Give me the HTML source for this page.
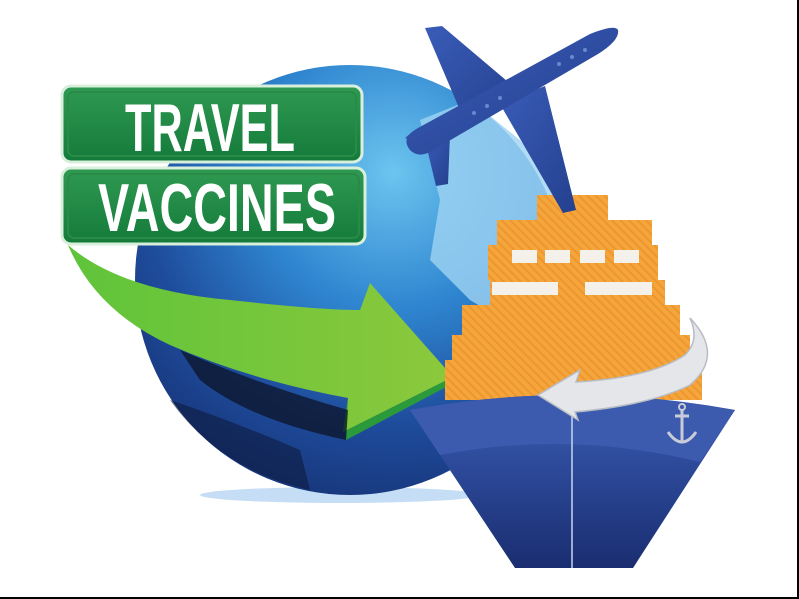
<!DOCTYPE html>
<html><head><meta charset="utf-8"><style>
html,body{margin:0;padding:0;background:#fff;}
svg{display:block}
</style></head><body>
<svg width="799" height="599" viewBox="0 0 799 599" xmlns="http://www.w3.org/2000/svg">
<defs>
<radialGradient id="gl" cx="0.6" cy="0.25" r="0.9">
<stop offset="0" stop-color="#6cc4ef"/><stop offset="0.35" stop-color="#2f86d0"/><stop offset="0.65" stop-color="#1e4c9c"/><stop offset="1" stop-color="#142a68"/></radialGradient>
<linearGradient id="sg" x1="0" y1="0" x2="0" y2="1"><stop offset="0" stop-color="#2f9a52"/><stop offset="1" stop-color="#147a3a"/></linearGradient>
<linearGradient id="ag" x1="0" y1="0" x2="1" y2="0"><stop offset="0" stop-color="#5fc43a"/><stop offset="1" stop-color="#8cc83c"/></linearGradient>
<linearGradient id="hg" x1="0" y1="0" x2="0" y2="1"><stop offset="0" stop-color="#4060b0"/><stop offset="0.4" stop-color="#2d4a9a"/><stop offset="1" stop-color="#1a2d70"/></linearGradient>
<pattern id="st" width="6" height="6" patternUnits="userSpaceOnUse" patternTransform="rotate(-45)"><rect width="6" height="6" fill="#f4a63c"/><rect width="2" height="6" fill="#e8861e" opacity="0.5"/></pattern>
<linearGradient id="pg" x1="0" y1="0" x2="1" y2="1"><stop offset="0" stop-color="#3a5cb8"/><stop offset="1" stop-color="#24408e"/></linearGradient>
</defs>
<ellipse cx="340" cy="495" rx="140" ry="8" fill="#9ec8f0" opacity="0.6"/>
<circle cx="350" cy="280" r="215" fill="url(#gl)"/>
<path d="M420 120 L470 100 L520 140 L560 190 L560 300 L520 330 L470 300 L430 260 L440 200 Z" fill="#9fd3f3" opacity="0.8"/>
<path d="M170 400 Q230 420 300 450 L310 490 Q220 470 170 400 Z" fill="#0e1a40" opacity="0.6"/>
<path d="M68 245 Q120 290 230 300 Q320 310 360 310 L370 283 L453 377 L343 432 L348 398 Q250 380 170 345 Q95 310 68 245 Z" fill="url(#ag)"/>
<path d="M348 398 L343 432 L453 377 L450 385 L346 440 Z" fill="#2a9a3a"/>
<path d="M180 350 Q260 385 348 410 L346 440 Q250 420 200 380 Z" fill="#0a0f20" opacity="0.7"/>
<rect x="62" y="86" width="300" height="76" rx="9" fill="url(#sg)" stroke="#d8efdc" stroke-width="3"/>
<rect x="68" y="92" width="288" height="64" rx="6" fill="none" stroke="#2a8a48" stroke-width="2"/>
<rect x="62" y="168" width="303" height="76" rx="9" fill="url(#sg)" stroke="#d8efdc" stroke-width="3"/>
<rect x="68" y="174" width="291" height="64" rx="6" fill="none" stroke="#2a8a48" stroke-width="2"/>
<text x="125" y="151" font-family="Liberation Sans, sans-serif" font-weight="bold" font-size="68" fill="#fff" textLength="170" lengthAdjust="spacingAndGlyphs">TRAVEL</text>
<text x="98" y="231" font-family="Liberation Sans, sans-serif" font-weight="bold" font-size="68" fill="#fff" textLength="238" lengthAdjust="spacingAndGlyphs">VACCINES</text>
<path d="M537 195 L608 195 L608 220 L652 220 L652 245 L658 245 L658 280 L665 280 L665 305 L680 305 L680 335 L690 335 L690 360 L702 360 L702 400 L445 400 L445 360 L452 360 L452 335 L462 335 L462 305 L490 305 L490 280 L488 280 L488 245 L497 245 L497 220 L537 220 Z" fill="url(#st)"/>
<g fill="#f4f0ea"><rect x="512" y="250" width="25" height="13"/><rect x="545" y="250" width="25" height="13"/><rect x="580" y="250" width="25" height="13"/><rect x="614" y="250" width="25" height="13"/><rect x="492" y="282" width="66" height="13"/><rect x="585" y="282" width="67" height="13"/></g>
<path d="M410 410 Q570 380 735 410 L633 568 L515 568 Z" fill="url(#hg)"/>
<path d="M410 410 Q570 380 735 410 L700 462 Q570 430 440 455 Z" fill="#3c5aae"/>
<line x1="572" y1="415" x2="572" y2="568" stroke="#c8d4f0" stroke-width="1.5"/>
<g stroke="#c8ccd8" stroke-width="3" fill="none"><line x1="682" y1="410" x2="682" y2="443"/><line x1="675" y1="416" x2="689" y2="416"/><path d="M668 432 Q682 452 696 432"/></g>
<circle cx="682" cy="407" r="3" fill="none" stroke="#c8ccd8" stroke-width="2"/>
<path d="M690 318 Q725 355 690 385 Q650 405 575 412 L578 420 L538 395 L580 370 L576 382 Q650 378 685 355 Q700 340 690 318 Z" fill="#e4e6ea" stroke="#b8bcc4" stroke-width="1.5"/>
<g fill="url(#pg)">
<path d="M465 122 L425 28 L442 26 L520 92 Z"/>
<path d="M500 104 L545 86 L576 210 L563 213 Z"/>
<path d="M425 146 L405 138 L412 132 L440 136 Z"/>
<path d="M425 140 L436 186 L448 184 L450 135 Z"/>
<path d="M410 150 Q400 138 418 128 L590 34 Q615 24 618 30 Q620 40 598 54 L430 152 Q418 158 410 150 Z"/>
</g>
<g fill="#6a88d0"><circle cx="585" cy="50" r="2"/><circle cx="572" cy="57" r="2"/><circle cx="559" cy="64" r="2"/><circle cx="500" cy="98" r="2"/><circle cx="487" cy="106" r="2"/><circle cx="474" cy="113" r="2"/></g>
<rect x="0" y="597" width="799" height="2" fill="#000"/>
<rect x="797" y="0" width="2" height="599" fill="#000"/>
</svg>
</body></html>
